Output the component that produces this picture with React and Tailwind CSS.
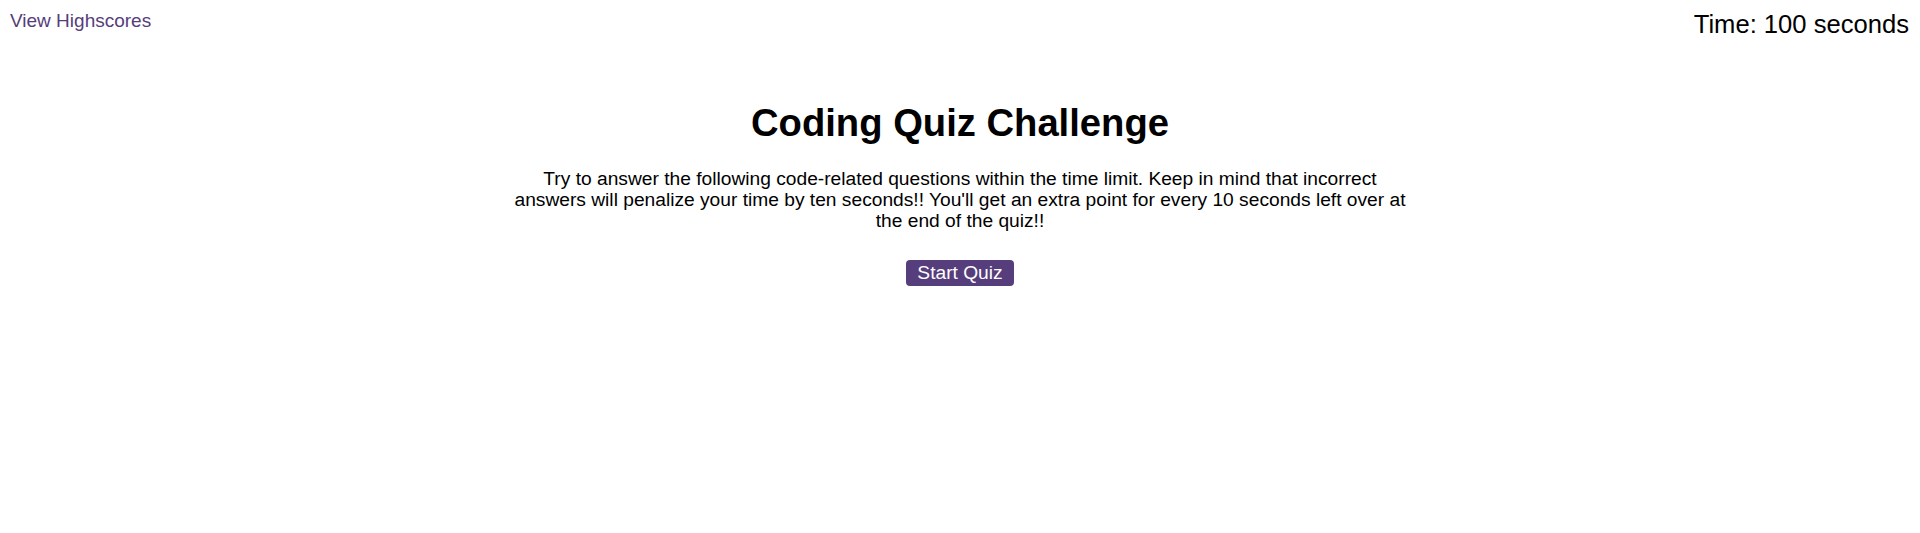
import React from "react";

const App = () => {
  return (
    <div className="min-h-[533px] bg-white text-black" style={{ fontFamily: '"Liberation Sans", Arial, sans-serif' }}>
      <header className="flex items-start justify-between pl-[10px] pr-[11px]">
        <a href="#" className="mt-[10px] text-[19px] leading-[22px] text-[#563d7c]">
          View Highscores
        </a>
        <div className="mt-[9px] text-[25.6px] leading-[30px]">Time: 100 seconds</div>
      </header>

      <main className="flex flex-col items-center">
        <h1 className="mt-[63px] text-[38.2px] font-bold leading-[42px]">Coding Quiz Challenge</h1>
        <p className="mt-[24px] w-[902px] text-center text-[19.2px] leading-[21px]">
          Try to answer the following code-related questions within the time limit. Keep in mind that incorrect
          answers will penalize your time by ten seconds!! You'll get an extra point for every 10 seconds left over at
          the end of the quiz!!
        </p>
        <button className="mt-[29px] h-[26px] rounded-[4px] bg-[#563d7c] px-[11px] text-[19.2px] leading-[22px] text-white">
          Start Quiz
        </button>
      </main>
    </div>
  );
};

export default App;
